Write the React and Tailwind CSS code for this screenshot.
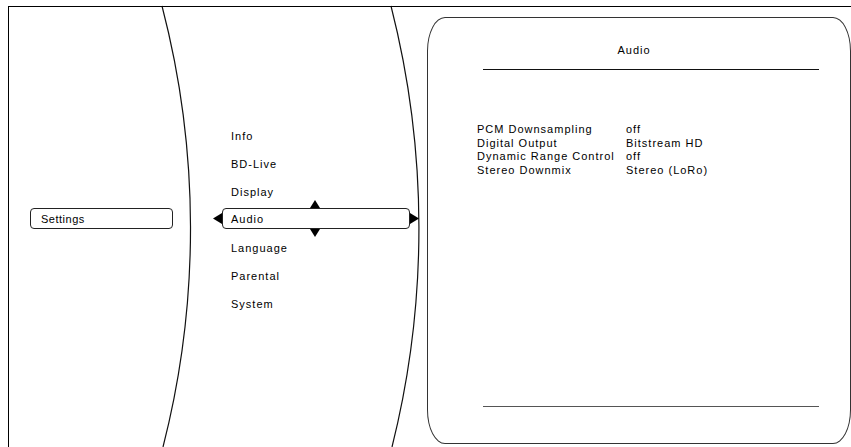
import React from 'react';

const menu = ['Info', 'BD-Live', 'Display', 'Audio', 'Language', 'Parental', 'System'];

const settings = [
  ['PCM Downsampling', 'off'],
  ['Digital Output', 'Bitstream HD'],
  ['Dynamic Range Control', 'off'],
  ['Stereo Downmix', 'Stereo (LoRo)'],
];

function Arcs() {
  // the two curved dividers behind the menu columns
  return (
    <svg className="absolute inset-0 pointer-events-none" width="851" height="447" viewBox="0 0 851 447">
      <path d="M162 6 A 882 882 0 0 1 163 447" fill="none" stroke="#111" strokeWidth="1.2" />
      <path d="M391 6 A 900 900 0 0 1 392 447" fill="none" stroke="#111" strokeWidth="1.2" />
    </svg>
  );
}

function MenuItem({ label, active }) {
  if (!active) {
    return (
      <div className="h-7 flex items-center pl-[9px]">{label}</div>
    );
  }
  return (
    <div className="h-7 flex items-center">
      <div className="relative w-[188px] h-[21px] -mt-[3px] flex items-center pl-2 border border-[#222] rounded-[4px]">
        {label}
        {/* left */}
        <svg className="absolute -left-[10px] top-[4px]" width="9" height="11" viewBox="0 0 9 11">
          <path d="M0 5.5L9 0v11z" fill="#000" />
        </svg>
        {/* right */}
        <svg className="absolute -right-[10px] top-[4px]" width="9" height="11" viewBox="0 0 9 11">
          <path d="M9 5.5L0 0v11z" fill="#000" />
        </svg>
        {/* up */}
        <svg className="absolute left-[87px] -top-[9px]" width="10" height="8" viewBox="0 0 10 8">
          <path d="M5 0L10 8H0z" fill="#000" />
        </svg>
        {/* down */}
        <svg className="absolute left-[87px] -bottom-[9px]" width="10" height="8" viewBox="0 0 10 8">
          <path d="M5 8L10 0H0z" fill="#000" />
        </svg>
      </div>
    </div>
  );
}

export default function App() {
  return (
    <div className="relative w-[851px] h-[447px] overflow-hidden bg-white text-black text-[11px] leading-[14px] tracking-[1px] font-['Liberation_Sans',Arial,sans-serif]">
      <Arcs />
      <div className="relative ml-2 mt-[6px] h-[441px] w-[900px] border-l border-t border-black flex">
        {/* Left column */}
        <div className="w-[191px] shrink-0 pt-[201px] pl-[21px]">
          <div className="w-[143px] h-[21px] flex items-center pl-[10px] border border-[#222] rounded-[4px] tracking-[0.5px]">
            Settings
          </div>
        </div>

        {/* Menu column */}
        <div className="w-[227px] shrink-0 pt-[115px] pl-[22px]">
          {menu.map((m) => (
            <MenuItem key={m} label={m} active={m === 'Audio'} />
          ))}
        </div>

        {/* Detail panel */}
        <div className="mt-[10px] w-[424px] h-[427px] shrink-0 flex flex-col border border-[#333] rounded-[18px/34px] bg-white">
          <div className="pt-[25px] pr-[10px] text-center">Audio</div>
          <div className="mt-[12px] ml-[55px] w-[336px] h-px bg-[#111]" />
          <div className="mt-[53px] ml-[49px] leading-[13.5px]">
            {settings.map(([k, v]) => (
              <div key={k} className="flex">
                <span className="w-[149px] shrink-0">{k}</span>
                <span>{v}</span>
              </div>
            ))}
          </div>
          <div className="mt-auto mb-[36px] ml-[55px] w-[336px] h-px bg-[#555]" />
        </div>
      </div>
    </div>
  );
}
